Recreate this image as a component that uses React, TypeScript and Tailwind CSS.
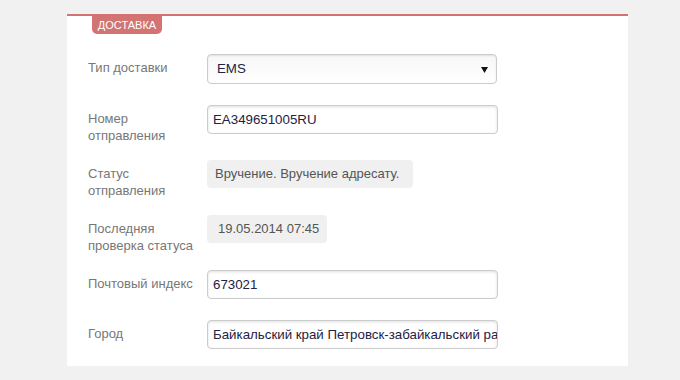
import React from "react";

const font = { fontFamily: '"Liberation Sans", Arial, sans-serif' };

function Label({ children }: { children: React.ReactNode }) {
  return (
    <div className="w-[119px] shrink-0 pt-[5px] text-[13px] leading-[17px] text-[#777777]">
      {children}
    </div>
  );
}

const inputCls =
  "h-[29px] w-[291px] shrink-0 rounded-[4px] border border-[#cccccc] bg-white px-[5px] text-[13.3px] leading-[27px] text-[#222244] shadow-[inset_0_1px_3px_rgba(0,0,0,0.13)] whitespace-nowrap overflow-hidden";

export default function App() {
  return (
    <div className="min-h-[380px] w-[680px] bg-[#f1f1f1] pt-[14px]" style={font}>
      <div className="ml-[67px] h-[352px] w-[561px] border-t-2 border-[#d27474] bg-white">
        <div className="ml-[25px] flex h-[18px] w-[70px] items-center justify-center rounded-b-[5px] bg-[#d27474] text-[11px] leading-none text-white">
          ДОСТАВКА
        </div>
        <div className="flex flex-col pl-[21px] pt-[20px]">
          <div className="flex h-[51px]">
            <Label>Тип доставки</Label>
            <div className="relative h-[30px] w-[290px] rounded-[4px] border border-[#cccccc] bg-gradient-to-b from-[#f7f7f7] to-white pl-[9px] text-[13.3px] leading-[28px] text-[#222244] shadow-[inset_0_1px_2px_rgba(0,0,0,0.1)]">
              EMS
              <svg
                className="absolute right-[8px] top-[12px]"
                width="7"
                height="6"
                viewBox="0 0 7 6"
              >
                <path d="M0 0 H7 L3.5 6 Z" fill="#111" />
              </svg>
            </div>
          </div>
          <div className="flex h-[55px]">
            <Label>
              Номер
              <br />
              отправления
            </Label>
            <div className={inputCls}>EA349651005RU</div>
          </div>
          <div className="flex h-[55px]">
            <Label>
              Статус
              <br />
              отправления
            </Label>
            <div className="h-[28px] w-[206px] shrink-0 whitespace-nowrap rounded-[4px] bg-[#f0f0f0] pl-[8px] text-[13px] leading-[28px] text-[#555555]">
              Вручение. Вручение адресату.
            </div>
          </div>
          <div className="flex h-[55px]">
            <Label>
              Последняя
              <br />
              проверка статуса
            </Label>
            <div className="h-[28px] w-[120px] shrink-0 whitespace-nowrap rounded-[4px] bg-[#f0f0f0] pl-[11px] text-[13px] leading-[28px] text-[#555555]">
              19.05.2014 07:45
            </div>
          </div>
          <div className="flex h-[50px]">
            <Label>Почтовый индекс</Label>
            <div className={inputCls}>673021</div>
          </div>
          <div className="flex h-[29px]">
            <Label>Город</Label>
            <div className={inputCls}>Байкальский край Петровск-забайкальский район</div>
          </div>
        </div>
      </div>
    </div>
  );
}
